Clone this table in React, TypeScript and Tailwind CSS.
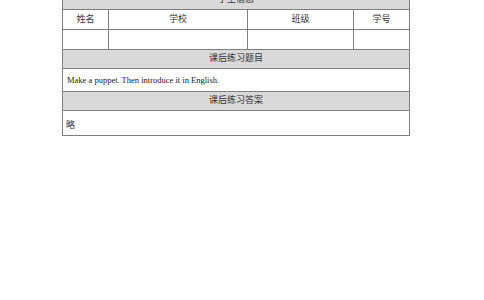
const head = 'flex items-center justify-center bg-[#d9d9d9] border-b border-[#7f7f7f]'
const cell = 'flex items-center justify-center border-r border-[#7f7f7f]'

export default function App() {
  return (
    <div className="w-[484px] h-[300px] overflow-hidden bg-white font-['Liberation_Serif','Noto_Sans_CJK_SC',serif] text-[9px] text-[#333]">
      <div className="ml-[62px] mt-[-11px] w-[348px] border border-[#7f7f7f]">
        <div className={`${head} h-[20px]`}>学生信息</div>

        <div className="flex h-[20px] border-b border-[#7f7f7f]">
          <div className={`${cell} w-[46px]`}>姓名</div>
          <div className={`${cell} w-[139px]`}>学校</div>
          <div className={`${cell} w-[106px]`}>班级</div>
          <div className="flex w-[55px] items-center justify-center">学号</div>
        </div>
        <div className="flex h-[20px] border-b border-[#7f7f7f]">
          <div className={`${cell} w-[46px]`} />
          <div className={`${cell} w-[139px]`} />
          <div className={`${cell} w-[106px]`} />
          <div className="w-[55px]" />
        </div>

        <div className={`${head} h-[19px]`}>课后练习题目</div>
        <div className="flex h-[23px] items-center border-b border-[#7f7f7f] pl-[4px] text-[8.5px] text-[#222]">
          Make a puppet. Then introduce it in English.
        </div>

        <div className={`${head} h-[19px]`}>课后练习答案</div>
        <div className="flex h-[24px] items-center pl-[3px] pt-[5px]">略</div>
      </div>
    </div>
  )
}
